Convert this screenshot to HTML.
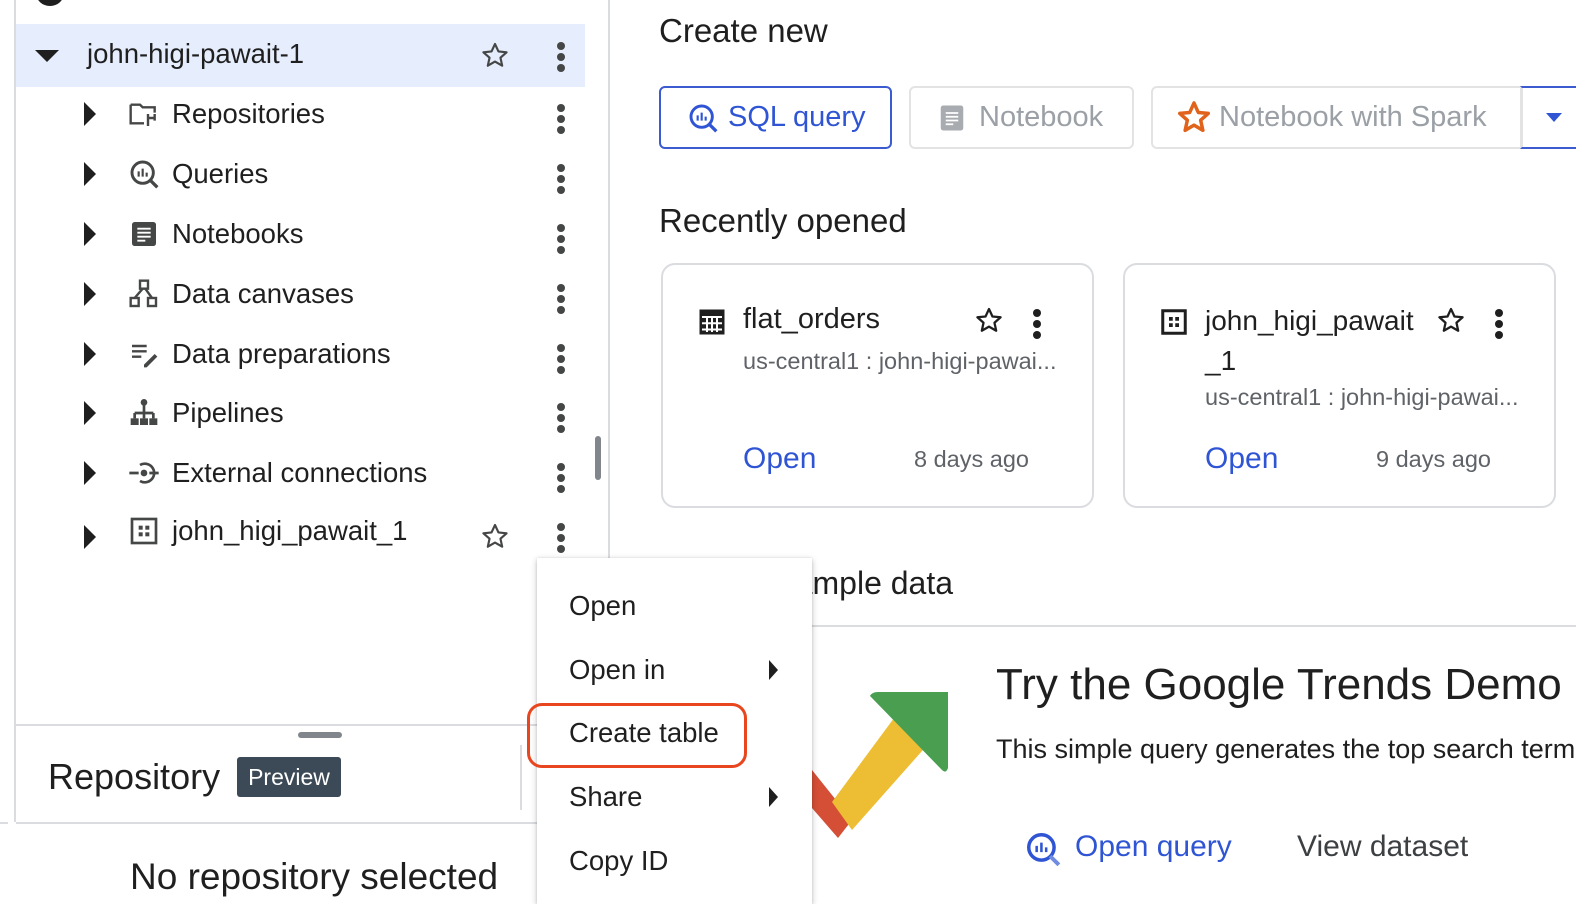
<!DOCTYPE html>
<html><head><meta charset="utf-8"><style>
*{box-sizing:border-box;margin:0;padding:0}
html,body{width:1576px;height:904px;overflow:hidden}
body{background:#fff;font-family:"Liberation Sans",sans-serif;color:#1f1f1f;position:relative}
.a{position:absolute;white-space:nowrap}
.row{position:absolute;left:16px;width:569px;height:60px}
.row .tri{position:absolute;left:68px;top:50%;margin-top:-12px;width:0;height:0;border-top:12px solid transparent;border-bottom:12px solid transparent;border-left:12px solid #1f1f1f}
.row .ic{position:absolute;left:112px;top:50%;margin-top:-16px;width:32px;height:32px}
.row .t{position:absolute;left:156px;top:50%;transform:translateY(-50%);font-size:27.5px;white-space:nowrap}
.dots{position:absolute;width:8px}
.dots i{display:block;width:8px;height:8px;border-radius:50%;background:#444746;margin-bottom:3px}
.btn{position:absolute;top:86px;height:63px;border:2px solid #e3e3e3;border-radius:6px;font-size:29px;color:#9aa0a6;display:flex;align-items:center;white-space:nowrap}
.card{position:absolute;top:263px;height:245px;border:2px solid #dadce0;border-radius:14px}
.mi{position:absolute;left:569px;font-size:27.5px;white-space:nowrap}
</style></head><body>
<div class="a" style="left:14px;top:0;width:2px;height:822px;background:#dadce0"></div>
<div class="a" style="left:608px;top:0;width:2px;height:560px;background:#dadce0"></div>
<div class="a" style="left:36px;top:-20px;width:28px;height:26px;border-radius:50%;background:#1f1f1f"></div>
<div class="a" style="left:16px;top:24px;width:569px;height:63px;background:#e6edfd"></div>
<div class="a" style="left:35px;top:50px;width:0;height:0;border-left:12px solid transparent;border-right:12px solid transparent;border-top:12px solid #1f1f1f"></div>
<div class="a" style="left:87px;top:38px;font-size:27.5px">john-higi-pawait-1</div>
<svg class="a" style="left:479px;top:40px" width="32" height="32" viewBox="0 0 24 24"><path d="M12 3l2.6 5.6 6.1.6-4.6 4.1 1.3 6L12 16.2 6.6 19.3l1.3-6L3.3 9.2l6.1-.6z" fill="none" stroke="#444746" stroke-width="1.6" stroke-linejoin="round"/></svg>
<div class="dots" style="left:557px;top:42px"><i></i><i></i><i></i></div>

<div class="row" style="top:84px"><div class="tri"></div>
<svg class="ic" viewBox="0 0 24 24"><path d="M2 5h7l2 2h9v4M2 5v14h10" fill="none" stroke="#444746" stroke-width="1.8"/><path d="M15 12v9M15 15h5v-3M20 15v2" fill="none" stroke="#444746" stroke-width="1.8"/></svg>
<div class="t">Repositories</div></div>
<div class="row" style="top:144px"><div class="tri"></div>
<svg class="ic" viewBox="0 0 24 24"><circle cx="11" cy="11" r="8" fill="none" stroke="#444746" stroke-width="2.2"/><path d="M16.5 16.5L22 22" stroke="#444746" stroke-width="2.5"/><path d="M8 10v4M11 8v6M14 11v3" stroke="#444746" stroke-width="1.6"/></svg>
<div class="t">Queries</div></div>
<div class="row" style="top:204px"><div class="tri"></div>
<svg class="ic" viewBox="0 0 24 24"><rect x="3" y="3" width="18" height="18" rx="2" fill="#444746"/><path d="M7 8h10M7 11h10M7 14h10M7 17h6" stroke="#fff" stroke-width="1.4"/></svg>
<div class="t">Notebooks</div></div>
<div class="row" style="top:264px"><div class="tri"></div>
<svg class="ic" viewBox="0 0 24 24"><rect x="9" y="2" width="6" height="6" fill="none" stroke="#444746" stroke-width="1.8"/><rect x="2" y="15" width="6" height="6" fill="none" stroke="#444746" stroke-width="1.8"/><rect x="15" y="15" width="6" height="6" fill="none" stroke="#444746" stroke-width="1.8"/><path d="M11 8l-6 7M13 8l5 7" stroke="#444746" stroke-width="1.8"/></svg>
<div class="t">Data canvases</div></div>
<div class="row" style="top:324px"><div class="tri"></div>
<svg class="ic" viewBox="0 0 24 24"><path d="M3 6h11M3 10h11M3 14h7" stroke="#444746" stroke-width="1.8"/><path d="M12 20l8-8 2 2-8 8h-2z" fill="#444746"/></svg>
<div class="t">Data preparations</div></div>
<div class="row" style="top:383px"><div class="tri"></div>
<svg class="ic" viewBox="0 0 24 24"><circle cx="12" cy="4" r="2.5" fill="#444746"/><path d="M12 6v6M5 12h14M5 12v4M12 12v4M19 12v4" stroke="#444746" stroke-width="2"/><rect x="2" y="16" width="6" height="5" fill="#444746"/><rect x="9" y="16" width="6" height="5" fill="#444746"/><rect x="16" y="16" width="6" height="5" fill="#444746"/></svg>
<div class="t">Pipelines</div></div>
<div class="row" style="top:443px"><div class="tri"></div>
<svg class="ic" viewBox="0 0 24 24"><path d="M1 12h7M16 12h7" stroke="#444746" stroke-width="2"/><circle cx="12" cy="12" r="2.5" fill="#444746"/><path d="M9 6a7 7 0 1 1 0 12" fill="none" stroke="#444746" stroke-width="2"/></svg>
<div class="t">External connections</div></div>
<div class="row" style="top:501px"><div class="tri" style="margin-top:-6px"></div>
<svg class="ic" viewBox="0 0 24 24"><rect x="3" y="3" width="18" height="18" fill="none" stroke="#444746" stroke-width="2"/><rect x="8" y="8" width="3" height="3" fill="#444746"/><rect x="13" y="8" width="3" height="3" fill="#444746"/><rect x="8" y="13" width="3" height="3" fill="#444746"/><rect x="13" y="13" width="3" height="3" fill="#444746"/></svg>
<div class="t">john_higi_pawait_1</div></div>
<svg class="a" style="left:479px;top:521px" width="32" height="32" viewBox="0 0 24 24"><path d="M12 3l2.6 5.6 6.1.6-4.6 4.1 1.3 6L12 16.2 6.6 19.3l1.3-6L3.3 9.2l6.1-.6z" fill="none" stroke="#444746" stroke-width="1.6" stroke-linejoin="round"/></svg>
<div class="dots" style="left:557px;top:104px"><i></i><i></i><i></i></div>
<div class="dots" style="left:557px;top:164px"><i></i><i></i><i></i></div>
<div class="dots" style="left:557px;top:224px"><i></i><i></i><i></i></div>
<div class="dots" style="left:557px;top:284px"><i></i><i></i><i></i></div>
<div class="dots" style="left:557px;top:344px"><i></i><i></i><i></i></div>
<div class="dots" style="left:557px;top:403px"><i></i><i></i><i></i></div>
<div class="dots" style="left:557px;top:463px"><i></i><i></i><i></i></div>
<div class="dots" style="left:557px;top:523px"><i></i><i></i><i></i></div>
<div class="a" style="left:595px;top:436px;width:6px;height:44px;border-radius:3px;background:#80868b"></div>

<div class="a" style="left:16px;top:724px;width:530px;height:2px;background:#dadce0"></div>
<div class="a" style="left:298px;top:732px;width:44px;height:6px;border-radius:3px;background:#80868b"></div>
<div class="a" style="left:48px;top:756px;font-size:36px">Repository</div>
<div class="a" style="left:237px;top:757px;width:104px;height:40px;background:#3c4a57;border-radius:3px;color:#fff;font-size:23px;line-height:40px;text-align:center">Preview</div>
<div class="a" style="left:520px;top:745px;width:2px;height:65px;background:#dadce0"></div>
<div class="a" style="left:16px;top:822px;width:530px;height:2px;background:#dadce0"></div>
<div class="a" style="left:0;top:822px;width:8px;height:2px;background:#dadce0"></div>
<div class="a" style="left:130px;top:856px;font-size:37px">No repository selected</div>

<div class="a" style="left:659px;top:12px;font-size:33px">Create new</div>
<div class="btn" style="left:659px;width:233px;border-color:#3c5bd0;color:#2f55d4;padding-left:26px">
<svg width="32" height="32" viewBox="0 0 24 24" style="margin-right:9px"><circle cx="11" cy="11" r="8" fill="none" stroke="#2f55d4" stroke-width="2.2"/><path d="M16.5 16.5L22 22" stroke="#2f55d4" stroke-width="2.5"/><path d="M8 10v4M11 8v6M14 11v3" stroke="#2f55d4" stroke-width="1.6"/></svg>SQL query</div>
<div class="btn" style="left:909px;width:225px;padding-left:26px">
<svg width="30" height="30" viewBox="0 0 24 24" style="margin-right:12px"><rect x="3" y="2" width="18" height="20" rx="2" fill="#a8abb0"/><path d="M7 8h10M7 11h10M7 14h10M7 17h6" stroke="#fff" stroke-width="1.4"/></svg>Notebook</div>
<div class="btn" style="left:1151px;width:372px;padding-left:22px;border-radius:6px 0 0 6px">
<svg width="38" height="38" viewBox="0 0 24 24" style="margin-right:6px"><path d="M12 2.5l2.7 6 6.3.6-4.8 4.3 1.4 6.4L12 16.5 6.4 19.8l1.4-6.4L3 9.1l6.3-.6z" fill="none" stroke="#e0621b" stroke-width="2.2" stroke-linejoin="round"/></svg>Notebook with Spark</div>
<div class="a" style="left:1520px;top:86px;width:56px;height:63px;border-top:2px solid #3c5bd0;border-bottom:2px solid #3c5bd0;border-left:2px solid #e3e3e3"></div>
<div class="a" style="left:1546px;top:113px;border-left:8px solid transparent;border-right:8px solid transparent;border-top:9px solid #2f55d4"></div>

<div class="a" style="left:659px;top:202px;font-size:33px">Recently opened</div>
<div class="card" style="left:661px;width:433px">
<svg class="a" style="left:34px;top:42px" width="30" height="30" viewBox="0 0 24 24"><rect x="2" y="2" width="20" height="20" fill="#1f1f1f"/><path d="M4 8h16M4 13h16M4 18h16M8 8v12M12 8v12M16 8v12" stroke="#fff" stroke-width="1.6"/></svg>
<div class="a" style="left:80px;top:38px;font-size:29px">flat_orders</div>
<svg class="a" style="left:310px;top:40px" width="32" height="32" viewBox="0 0 24 24"><path d="M12 3l2.6 5.6 6.1.6-4.6 4.1 1.3 6L12 16.2 6.6 19.3l1.3-6L3.3 9.2l6.1-.6z" fill="none" stroke="#1f1f1f" stroke-width="1.7" stroke-linejoin="round"/></svg>
<div class="dots" style="left:370px;top:44px"><i style="background:#1f1f1f"></i><i style="background:#1f1f1f"></i><i style="background:#1f1f1f"></i></div>
<div class="a" style="left:80px;top:83px;font-size:23.5px;color:#5f6368">us-central1 : john-higi-pawai...</div>
<div class="a" style="left:80px;top:177px;font-size:30px;color:#2f55d4">Open</div>
<div class="a" style="left:251px;top:181px;font-size:23.5px;color:#5f6368">8 days ago</div>
</div>
<div class="card" style="left:1123px;width:433px">
<svg class="a" style="left:34px;top:42px" width="30" height="30" viewBox="0 0 24 24"><rect x="3" y="3" width="18" height="18" fill="none" stroke="#1f1f1f" stroke-width="2.4"/><rect x="8" y="8" width="3" height="3" fill="#1f1f1f"/><rect x="13" y="8" width="3" height="3" fill="#1f1f1f"/><rect x="8" y="13" width="3" height="3" fill="#1f1f1f"/><rect x="13" y="13" width="3" height="3" fill="#1f1f1f"/></svg>
<div class="a" style="left:80px;top:36px;font-size:28px;line-height:40px">john_higi_pawait<br>_1</div>
<svg class="a" style="left:310px;top:40px" width="32" height="32" viewBox="0 0 24 24"><path d="M12 3l2.6 5.6 6.1.6-4.6 4.1 1.3 6L12 16.2 6.6 19.3l1.3-6L3.3 9.2l6.1-.6z" fill="none" stroke="#1f1f1f" stroke-width="1.7" stroke-linejoin="round"/></svg>
<div class="dots" style="left:370px;top:44px"><i style="background:#1f1f1f"></i><i style="background:#1f1f1f"></i><i style="background:#1f1f1f"></i></div>
<div class="a" style="left:80px;top:119px;font-size:23.5px;color:#5f6368">us-central1 : john-higi-pawai...</div>
<div class="a" style="left:80px;top:177px;font-size:30px;color:#2f55d4">Open</div>
<div class="a" style="left:251px;top:181px;font-size:23.5px;color:#5f6368">9 days ago</div>
</div>

<div class="a" style="left:659px;top:565px;font-size:32px">Try with sample data</div>
<div class="a" style="left:659px;top:625px;width:917px;height:2px;background:#dadce0"></div>
<svg class="a" style="left:800px;top:690px" width="150" height="150" viewBox="0 0 150 150">
<path d="M12 80 L52 130 L38 148 L12 118 Z" fill="#d44f36"/>
<path d="M32 112 L100 20 L130 52 L52 140 Z" fill="#edbd33"/>
<path d="M70 6 Q72 2 78 2 L148 2 L148 78 Q146 84 142 80 Z" fill="#499f4f"/>
</svg>
<div class="a" style="left:996px;top:650px;width:580px;height:140px;overflow:hidden">
<div class="a" style="left:0;top:10px;font-size:44px">Try the Google Trends Demo Query</div>
<div class="a" style="left:0;top:84px;font-size:27px">This simple query generates the top search terms</div>
</div>
<svg class="a" style="left:1024px;top:830px" width="38" height="38" viewBox="0 0 24 24"><circle cx="11" cy="11" r="8" fill="none" stroke="#2f55d4" stroke-width="2.2"/><path d="M16.5 16.5L22 22" stroke="#6f8ce0" stroke-width="2.5"/><path d="M8 10v4M11 8v6M14 11v3" stroke="#2f55d4" stroke-width="1.6"/></svg>
<div class="a" style="left:1075px;top:830px;font-size:30px;color:#2f55d4">Open query</div>
<div class="a" style="left:1297px;top:830px;font-size:30px;color:#3c4043">View dataset</div>

<div class="a" style="left:537px;top:558px;width:275px;height:346px;background:#fff;box-shadow:0 2px 6px rgba(0,0,0,.25),0 0 2px rgba(0,0,0,.1)">
<div class="mi" style="left:32px;top:32px">Open</div>
<div class="mi" style="left:32px;top:96px">Open in</div>
<div class="a" style="left:232px;top:102px;border-top:10px solid transparent;border-bottom:10px solid transparent;border-left:9px solid #1f1f1f"></div>
<div class="mi" style="left:32px;top:159px">Create table</div>
<div class="mi" style="left:32px;top:223px">Share</div>
<div class="a" style="left:232px;top:229px;border-top:10px solid transparent;border-bottom:10px solid transparent;border-left:9px solid #1f1f1f"></div>
<div class="mi" style="left:32px;top:287px">Copy ID</div>
</div>
<div class="a" style="left:527px;top:703px;width:220px;height:65px;border:3px solid #e8461f;border-radius:15px"></div>
</body></html>
